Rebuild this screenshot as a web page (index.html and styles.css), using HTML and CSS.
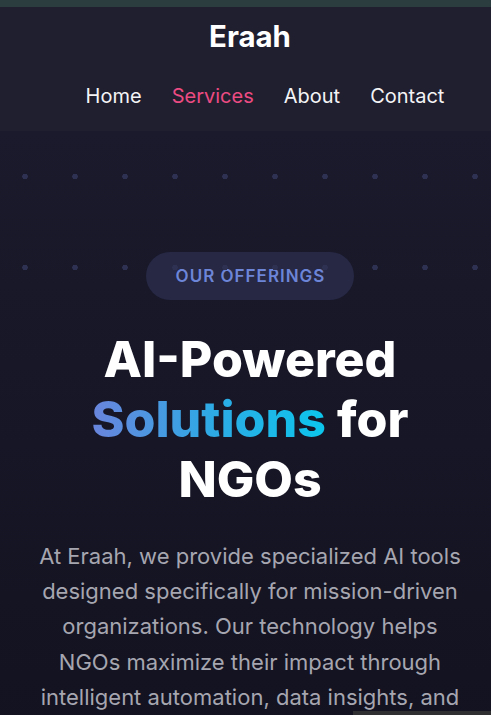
FILE: index.html
```html
<!DOCTYPE html>
<html lang="en">
<head>
<meta charset="utf-8">
<title>Eraah – Services</title>
<link rel="stylesheet" href="styles.css">
</head>
<body>
<div class="page">
  <div class="topstrip"></div>
  <header class="site-header">
    <div class="logo">Eraah</div>
    <nav>
      <ul class="nav-list">
        <li><a href="#" class="nav-link">Home</a></li>
        <li><a href="#" class="nav-link active">Services</a></li>
        <li><a href="#" class="nav-link">About</a></li>
        <li><a href="#" class="nav-link">Contact</a></li>
      </ul>
    </nav>
  </header>
  <section class="hero">
    <div class="dots" aria-hidden="true"></div>
    <span class="badge">OUR OFFERINGS</span>
    <h1 class="title">AI-Powered <span class="grad">Solutions</span> for NGOs</h1>
    <p class="lead">At Eraah, we provide specialized AI tools designed specifically for mission-driven organizations. Our technology helps NGOs maximize their impact through intelligent automation, data insights, and</p>
  </section>
</div>
<div class="corner-bar"></div>
</body>
</html>
```
FILE: styles.css
```css
html, body {
  margin: 0;
  padding: 0;
  overflow-x: hidden;
  background: #131320;
}
body {
  font-family: Inter, "Noto Sans", sans-serif;
  color: #fff;
}
.page {
  width: 500px;
}
.topstrip {
  height: 7px;
  background: #2b3d3e;
}
.site-header {
  background: #201f30;
  padding-top: 13px;
  height: 111px;
  display: flex;
  flex-direction: column;
  align-items: center;
}
.logo {
  font-size: 29.4px;
  font-weight: 700;
  line-height: 34px;
  color: #fff;
}
.nav-list {
  list-style: none;
  margin: 30px 0 0 0;
  padding: 0;
  display: flex;
}
.nav-list li {
  margin-left: 30px;
}
.nav-link {
  font-size: 20px;
  line-height: 24px;
  color: #f4f4f6;
  text-decoration: none;
}
.nav-link.active {
  color: #ec4b82;
}
.hero {
  position: relative;
  background: linear-gradient(180deg, #1a1a2c 0%, #161626 50%, #121220 100%);
  padding: 121px 30px 40px;
  display: flex;
  flex-direction: column;
  align-items: center;
  text-align: center;
}
.dots {
  position: absolute;
  left: 0;
  top: 0;
  width: 100%;
  height: 182px;
  background-image: radial-gradient(circle at 25px 45.5px, #2e3152 2.5px, transparent 3px);
  background-size: 50px 91px;
  pointer-events: none;
  z-index: 2;
}
.badge {
  display: inline-block;
  background: #262844;
  color: #6d85d7;
  font-size: 17px;
  font-weight: 600;
  letter-spacing: 1px;
  line-height: 20px;
  padding: 14px 29px 14px 30px;
  border-radius: 24px;
}
.title {
  margin: 29px 0 0;
  font-size: 50px;
  line-height: 60px;
  font-weight: 800;
  color: #fff;
  max-width: 360px;
}
.grad {
  background: linear-gradient(90deg, #6a84dc 0%, #2fa9e4 50%, #0cc6ec 100%);
  -webkit-background-clip: text;
  background-clip: text;
  color: transparent;
}
.lead {
  margin: 30px 0 0;
  font-size: 22px;
  line-height: 35.2px;
  color: #a6a6b0;
  max-width: 424px;
}
.corner-bar {
  position: fixed;
  right: 0;
  bottom: 0;
  width: 138px;
  height: 4px;
  background: #2f2f31;
}
```
